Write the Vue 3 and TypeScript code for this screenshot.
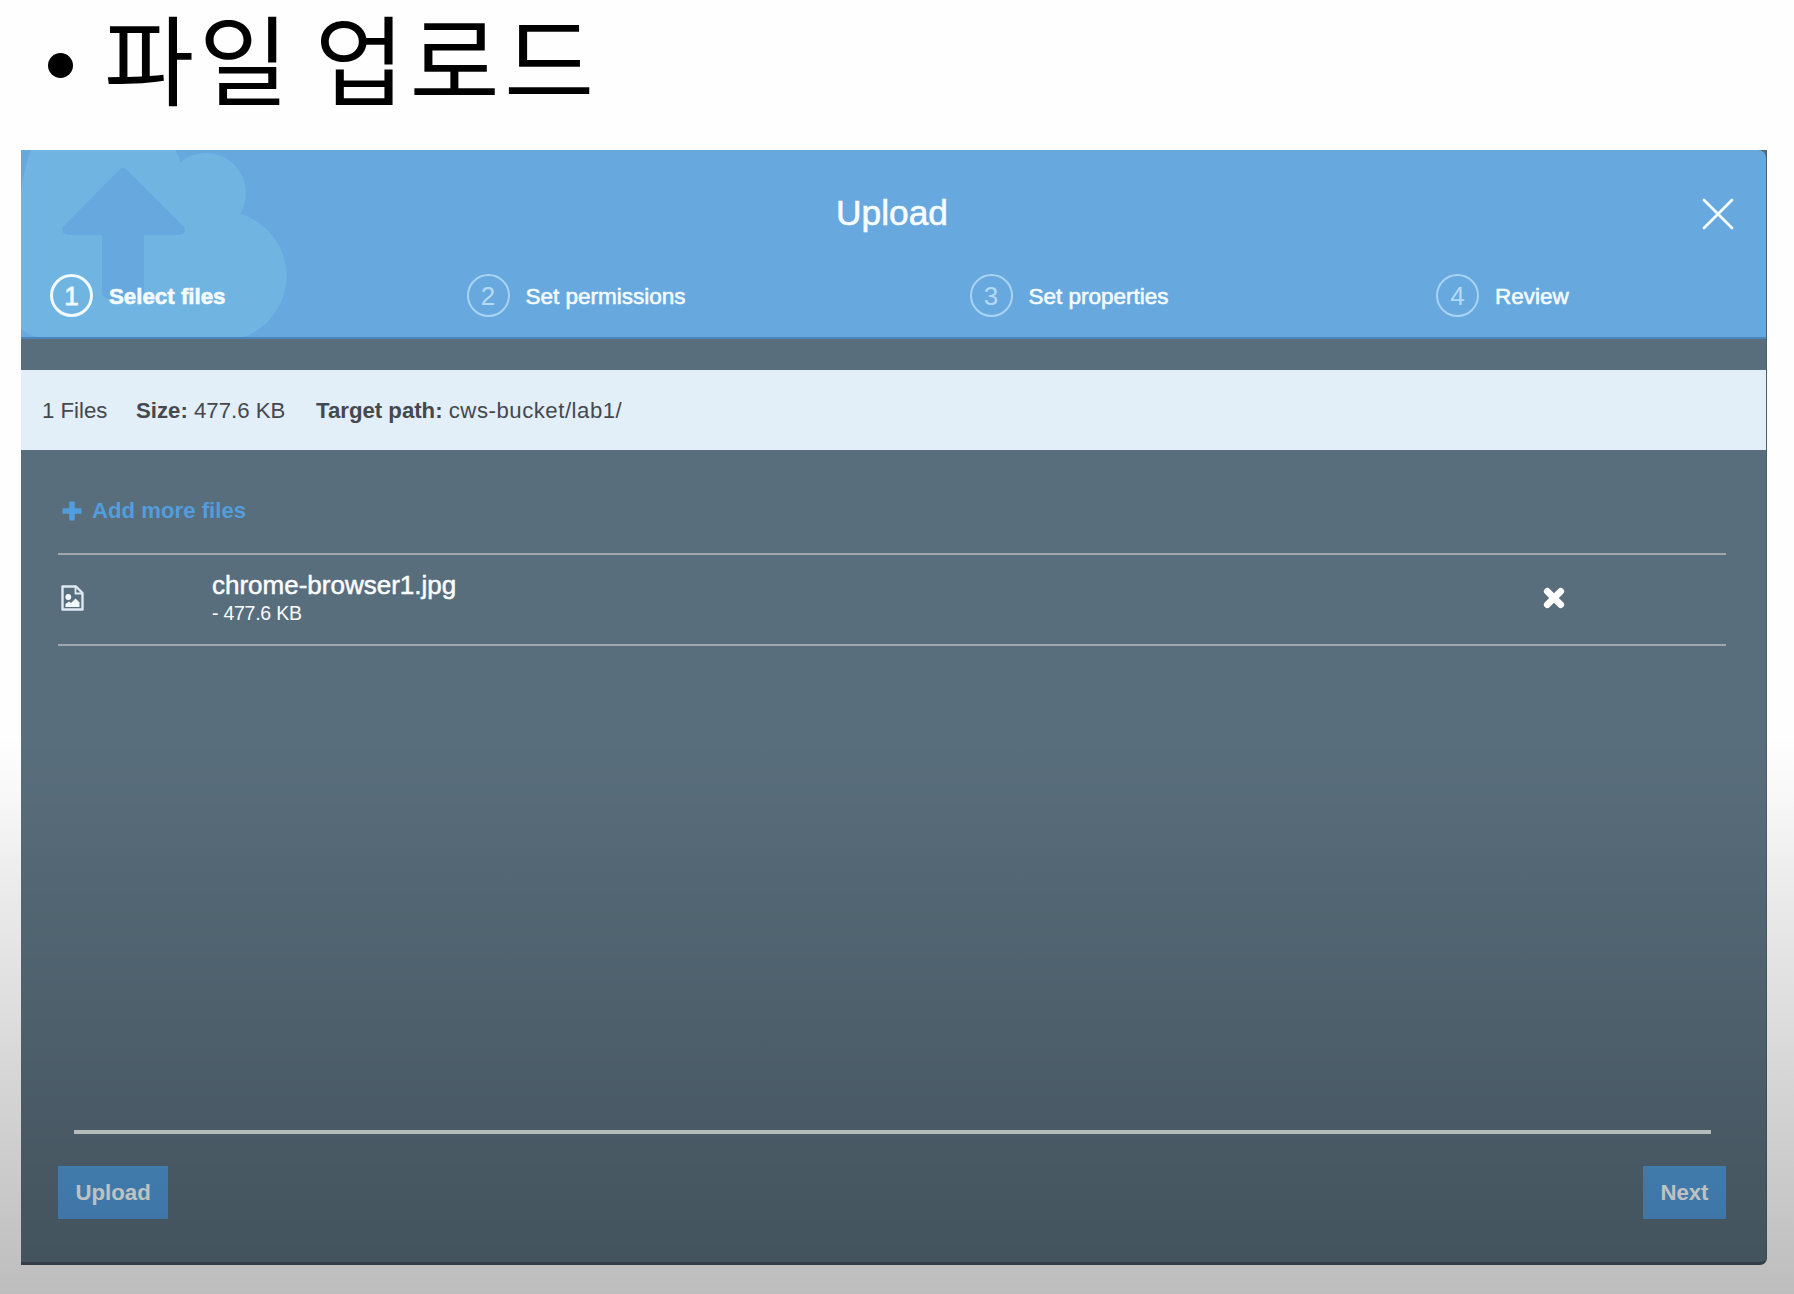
<script setup lang="ts">
interface Step {
  n: number
  label: string
  active: boolean
}
const steps: Step[] = [
  { n: 1, label: 'Select files', active: true },
  { n: 2, label: 'Set permissions', active: false },
  { n: 3, label: 'Set properties', active: false },
  { n: 4, label: 'Review', active: false },
]
const files = [{ name: 'chrome-browser1.jpg', size: '477.6 KB' }]
</script>

<template>
  <main class="slide">
    <h1 class="heading"><span class="bullet"></span><span class="topic">파일 업로드</span></h1>

    <section class="dialog">
      <header class="head">
        <svg class="cloud" width="270" height="187" viewBox="21 150 270 187">
          <g fill="#70b4e2">
            <circle cx="206" cy="193" r="40" />
            <circle cx="221.500" cy="276" r="65" />
            <path d="M31 150H175Q179 155 180 162L240 215V339H48Q30 337 21 329V190Q25 166 31 150Z" />
          </g>
          <path
            d="M119.500 169.500Q123 166.500 126.500 169.500L184 227Q187 234 180 235H144V291Q144 299 136 299H110Q102 299 102 291V235H68Q60 234 63 227Z"
            fill="#67a9de"
          />
        </svg>
        <h2 class="title">Upload</h2>
        <button class="close" aria-label="Close">
          <svg width="32" height="32" viewBox="0 0 32 32" fill="none" stroke="#f4fbff" stroke-width="2.800" stroke-linecap="round">
            <path d="M2 2L30 30M30 2L2 30" />
          </svg>
        </button>
        <nav class="steps">
          <div v-for="s in steps" :key="s.n" class="step" :class="{ active: s.active }">
            <span class="num">{{ s.n }}</span>
            <span class="label">{{ s.label }}</span>
          </div>
        </nav>
      </header>

      <div class="info">
        <span class="count">1 Files</span>
        <span class="size"><b>Size:</b> 477.6 KB</span>
        <span class="target"><b>Target path:</b> <span class="path">cws-bucket/lab1/</span></span>
      </div>

      <div class="body">
        <button class="add">
          <svg width="20" height="20" viewBox="0 0 20 20" fill="none" stroke="#519ddd" stroke-width="5.600" stroke-linejoin="round">
            <path d="M10 .5V19.500M.5 10H19.500" />
          </svg>
          <span>Add more files</span>
        </button>
        <div v-for="f in files" :key="f.name" class="file">
          <svg class="doc" width="23" height="26" viewBox="0 0 23 26" fill="none" stroke="#dfe9f2" stroke-width="2.400" stroke-linejoin="round">
            <path d="M1.500 1.500H15L21.500 8V24.500H1.500Z" />
            <path d="M14.500 2V8.500H21" stroke-width="1.800" />
            <circle cx="7.300" cy="12" r="2.900" fill="#f4f9ff" stroke="none" />
            <path d="M4.500 22V19L8 16.500L10 18L14.500 13.500L18.500 17.500V22Z" fill="#f4f9ff" stroke="none" />
          </svg>
          <div class="meta">
            <div class="name">{{ f.name }}</div>
            <div class="bytes">- {{ f.size }}</div>
          </div>
          <svg class="remove" width="22" height="22" viewBox="0 0 22 22" fill="none" stroke="#fff" stroke-width="6.800" stroke-linecap="round">
            <path d="M4.300 4.300L17.700 17.700M17.700 4.300L4.300 17.700" />
          </svg>
        </div>
      </div>

      <footer class="foot">
        <button class="btn">Upload</button>
        <button class="btn">Next</button>
      </footer>
    </section>
    <div class="shade"></div>
  </main>
</template>

<style>
body {
  margin: 0;
  overflow: hidden;
}
</style>

<style scoped>
* {
  box-sizing: border-box;
}
button {
  border: 0;
  padding: 0;
  background: none;
  font-family: inherit;
}
svg {
  display: block;
}
.slide {
  position: relative;
  width: 1794px;
  height: 1294px;
  padding-left: 21px;
  background: #fefefe;
  overflow: hidden;
  font-family: 'Liberation Sans', Arial, 'Noto Sans CJK KR', sans-serif;
}
.heading {
  display: flex;
  align-items: flex-start;
  margin: 0;
  height: 150px;
  padding: 0 0 0 27px;
  font: 400 98px/111px 'Noto Sans CJK KR', sans-serif;
  letter-spacing: 4.500px;
  word-spacing: -5px;
  color: #000;
  white-space: nowrap;
}
.bullet {
  width: 25px;
  height: 25px;
  margin: 53px 31px 0 0;
  border-radius: 50%;
  background: #000;
}
.dialog {
  display: flex;
  flex-direction: column;
  width: 1746px;
  height: 1115px;
  border-right: 1.500px solid #4d5d69;
  border-bottom: 3px solid #43505e;
  border-bottom-right-radius: 7px;
  background: #596e7c;
}
.head {
  position: relative;
  display: flex;
  flex-direction: column;
  justify-content: space-between;
  height: 189px;
  padding: 42px 0 20px;
  border-bottom: 2px solid #4a86bb;
  border-top-right-radius: 8px;
  background: #67a9de;
}
.cloud {
  position: absolute;
  left: 0;
  top: 0;
}
.title {
  position: relative;
  margin: 0;
  padding-right: 3px;
  text-align: center;
  font-size: 35.300px;
  line-height: 42px;
  font-weight: 400;
  color: #f7fcff;
  -webkit-text-stroke: 0.600px #f7fcff;
}
.close {
  position: absolute;
  right: 32px;
  top: 48px;
}
.steps {
  position: relative;
  display: grid;
  grid-template-columns: 416.500px 503px 466.500px 1fr;
  padding-left: 29px;
}
.step {
  display: flex;
  align-items: center;
  gap: 16px;
  font-size: 22.500px;
  color: #f4fbff;
}
.num {
  display: flex;
  align-items: center;
  justify-content: center;
  width: 43px;
  height: 43px;
  padding-top: 2px;
  border: 2.500px solid #a9d3f3;
  border-radius: 50%;
  font-size: 26px;
  color: #b5daf6;
}
.label {
  padding-top: 2px;
  -webkit-text-stroke: 0.600px #f4fbff;
  line-height: 26px;
}
.active .num {
  border: 3px solid #f0faff;
  color: #f0faff;
  -webkit-text-stroke: 0.800px #f0faff;
}
.active .label {
  font-weight: 700;
  font-size: 22.300px;
}
.info {
  display: flex;
  align-items: center;
  height: 80px;
  margin-top: 31px;
  padding: 1px 0 0 21px;
  background: #e2eef8;
  font-size: 22.200px;
  color: #45484c;
}
.count {
  width: 94px;
}
.size {
  width: 180px;
}
.path {
  letter-spacing: 0.520px;
}
.body {
  flex: 1;
  margin: 0 40px 0 37px;
}
.add {
  display: flex;
  align-items: center;
  gap: 10px;
  height: 103px;
  padding: 19px 0 0 4px;
  font-size: 22.200px;
  font-weight: 700;
  color: #519ddd;
}
.file {
  display: flex;
  align-items: center;
  height: 93px;
  padding: 0 0 3px 3px;
  border-top: 2px solid #a0a7ac;
  border-bottom: 2px solid #a0a7ac;
}
.meta {
  flex: 1;
  margin: 0 0 0 128px;
  color: #fafdff;
}
.name {
  font-size: 26px;
  line-height: 30px;
  -webkit-text-stroke: 0.500px #fafdff;
}
.bytes {
  font-size: 19.500px;
  line-height: 26px;
  letter-spacing: -0.250px;
}
.remove {
  margin-right: 161px;
}
.foot {
  display: flex;
  justify-content: space-between;
  align-items: flex-start;
  position: relative;
  height: 131px;
  padding: 35px 40px 0 37px;
}
.foot::before {
  content: '';
  position: absolute;
  left: 53px;
  right: 55px;
  top: -1px;
  height: 4px;
  background: #dfe5e6;
}
.btn {
  height: 53px;
  padding: 1px 17.500px 0;
  background: #5099d6;
  font-size: 22.200px;
  font-weight: 700;
  color: #f1f5f6;
}
.shade {
  position: absolute;
  left: 0;
  right: 0;
  bottom: 0;
  height: 560px;
  pointer-events: none;
  background: linear-gradient(rgba(0, 0, 0, 0), rgba(0, 0, 0, 0.025) 11%, rgba(0, 0, 0, 0.065) 24%, rgba(0, 0, 0, 0.120) 47%, rgba(0, 0, 0, 0.170) 65%, rgba(0, 0, 0, 0.255));
}
</style>
